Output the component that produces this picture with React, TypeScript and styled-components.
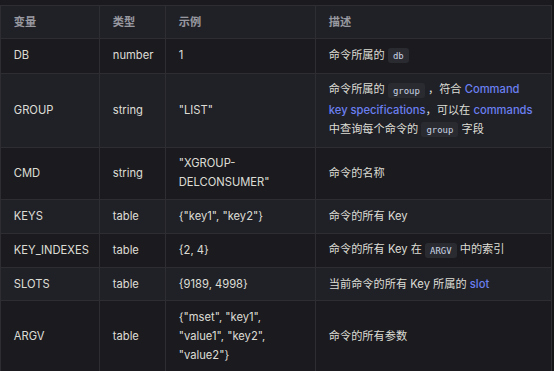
import React from "react";
import styled, { createGlobalStyle } from "styled-components";

const Global = createGlobalStyle`
  html, body { margin: 0; padding: 0; background: #1b1b1f; }
  body {
    font-family: Inter, "Noto Sans CJK SC", sans-serif;
    -webkit-font-smoothing: antialiased;
  }
`;

const Page = styled.div`
  width: 554px;
  height: 371px;
  padding-top: 5px;
  box-sizing: border-box;
  background: linear-gradient(to right, #1b1b1f 552px, #161618 552px);
  overflow: hidden;
`;

const Table = styled.table`
  border-collapse: collapse;
  table-layout: fixed;
  width: 552px;
  font-size: 11.2px;
  line-height: 19.2px;
  color: rgba(255, 255, 245, 0.86);
`;

const Row = styled.tr<{ $soft?: boolean }>`
  background: ${(p) => (p.$soft ? "#202127" : "#1b1b1f")};
  border-top: 1px solid #2e2e32;
`;

const Th = styled.th`
  text-align: left;
  font-weight: 600;
  color: rgba(235, 235, 245, 0.6);
  padding: 6.6px 12.8px;
  border: 1px solid #2e2e32;
`;

const Td = styled.td`
  padding: 6.6px 12.8px;
  border: 1px solid #2e2e32;
  vertical-align: middle;
`;

const Code = styled.code`
  font-family: "DejaVu Sans Mono", "Liberation Mono", monospace;
  font-size: 0.8em;
  padding: 2.5px 5px;
  border-radius: 3px;
  background: #2a2b31;
  color: #c9d3e3;
`;

const Link = styled.a`
  color: #6b7ff0;
  text-decoration: none;
  font-weight: 500;
`;

const rows: { v: string; t: string; e: React.ReactNode; d: React.ReactNode }[] = [
  { v: "DB", t: "number", e: "1", d: <>命令所属的 <Code>db</Code></> },
  {
    v: "GROUP",
    t: "string",
    e: '"LIST"',
    d: (
      <>
        命令所属的 <Code>group</Code> ，符合 <Link>Command key specifications</Link>，可以在{" "}
        <Link>commands</Link> 中查询每个命令的 <Code>group</Code> 字段
      </>
    ),
  },
  { v: "CMD", t: "string", e: '"XGROUP-DELCONSUMER"', d: "命令的名称" },
  { v: "KEYS", t: "table", e: '{"key1", "key2"}', d: "命令的所有 Key" },
  { v: "KEY_INDEXES", t: "table", e: "{2, 4}", d: <>命令的所有 Key 在 <Code>ARGV</Code> 中的索引</> },
  { v: "SLOTS", t: "table", e: "{9189, 4998}", d: <>当前命令的所有 Key 所属的 <Link>slot</Link></> },
  { v: "ARGV", t: "table", e: '{"mset", "key1", "value1", "key2", "value2"}', d: "命令的所有参数" },
];

export default function App() {
  return (
    <Page>
      <Global />
      <Table>
        <colgroup>
          <col style={{ width: 99 }} />
          <col style={{ width: 66 }} />
          <col style={{ width: 150 }} />
          <col />
        </colgroup>
        <thead>
          <Row $soft>
            <Th>变量</Th>
            <Th>类型</Th>
            <Th>示例</Th>
            <Th>描述</Th>
          </Row>
        </thead>
        <tbody>
          {rows.map((r, i) => (
            <Row key={r.v} $soft={i % 2 === 1}>
              <Td>{r.v}</Td>
              <Td>{r.t}</Td>
              <Td>{r.e}</Td>
              <Td>{r.d}</Td>
            </Row>
          ))}
        </tbody>
      </Table>
    </Page>
  );
}
